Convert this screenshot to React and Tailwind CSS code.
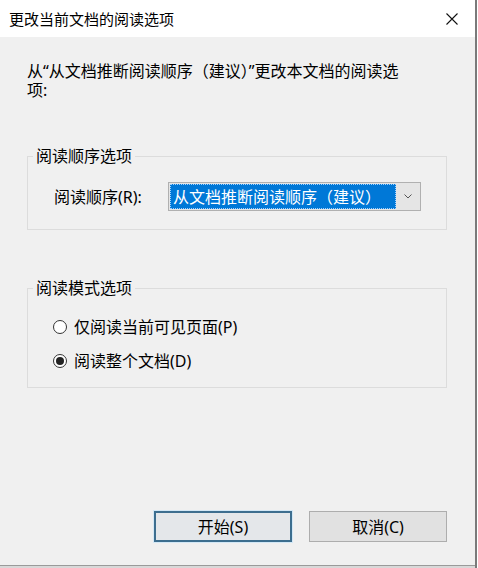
import React from "react";

const font = "font-['Noto_Sans','Noto_Sans_CJK_SC',sans-serif]";

function Radio({ checked, label }) {
  return (
    <div className="flex items-center h-[20px] ml-[20px]">
      <div className="w-[14px] h-[14px] rounded-full border border-[#333] bg-white flex items-center justify-center shrink-0">
        {checked && <div className="w-[8px] h-[8px] rounded-full bg-[#222]" />}
      </div>
      <span className="ml-[7px] text-[16px] leading-[20px] text-black">{label}</span>
    </div>
  );
}

export default function App() {
  return (
    <div className={`w-[478px] h-[568px] flex flex-row overflow-hidden ${font}`}>
      <div className="w-[475px] h-full flex flex-col bg-[#f0f0f0]">
        <div className="h-[37px] bg-white flex items-center justify-between pl-[9px] pr-[17px] shrink-0">
          <span className="text-[15px] leading-[20px] text-black">更改当前文档的阅读选项</span>
          <svg width="12" height="12" viewBox="0 0 12 12">
            <path d="M0.5 0.5 L11.5 11.5 M11.5 0.5 L0.5 11.5" stroke="#111" strokeWidth="1.1" fill="none" />
          </svg>
        </div>
        <div className="flex-1 flex flex-col pl-[27px] pr-[28px] pt-[25px]">
          <p className="w-[384px] text-[16px] leading-[19px] text-black">
            从“从文档推断阅读顺序（建议）”更改本文档的阅读选项:
          </p>
          <fieldset className="mt-[46px] border border-[#dcdcdc] px-[5px] pb-[18px]">
            <legend className="px-[3px] text-[16px] leading-[20px] text-black">阅读顺序选项</legend>
            <div className="mt-[16px] flex items-center">
              <span className="ml-[21px] w-[114px] text-[16px] leading-[20px] text-black">阅读顺序(R):</span>
              <div className="w-[253px] h-[29px] border border-[#b0b0b0] bg-[#e5e5e5] flex items-stretch p-[1px]">
                <div className="flex-1 bg-[#0078d7] border border-dotted border-[#9fd0ff] flex items-center pl-[2px]">
                  <span className="text-[16px] leading-[20px] text-white whitespace-nowrap">从文档推断阅读顺序（建议）</span>
                </div>
                <div className="w-[23px] flex items-center justify-center">
                  <svg width="8" height="5" viewBox="0 0 8 5">
                    <path d="M0.5 0.5 L4 4 L7.5 0.5" stroke="#555" strokeWidth="1" fill="none" />
                  </svg>
                </div>
              </div>
            </div>
          </fieldset>
          <fieldset className="mt-[48px] border border-[#dcdcdc] px-[5px] pb-[16px]">
            <legend className="px-[3px] text-[16px] leading-[20px] text-black">阅读模式选项</legend>
            <div className="mt-[19px]">
              <Radio label="仅阅读当前可见页面(P)" />
            </div>
            <div className="mt-[14px]">
              <Radio checked label="阅读整个文档(D)" />
            </div>
          </fieldset>
          <div className="mt-auto mb-[23px] flex justify-end gap-[17px]">
            <div className="w-[138px] h-[31px] border-2 border-[#3d6e8f] bg-[#e4e7ea] shadow-[0_0_0_1px_#d3e8f6] flex items-center justify-center text-[16px] leading-[20px] text-black">
              开始(S)
            </div>
            <div className="w-[138px] h-[31px] border border-[#adadad] bg-[#e1e1e1] flex items-center justify-center text-[16px] leading-[20px] text-black">
              取消(C)
            </div>
          </div>
        </div>
        <div className="h-[1px] bg-[#9a9a9a] shrink-0" />
        <div className="h-[2px] bg-[#d8d8d8] shrink-0" />
      </div>
      <div className="w-[2px] h-full bg-[#7a7a7a]" />
      <div className="w-[1px] h-full bg-white" />
    </div>
  );
}
